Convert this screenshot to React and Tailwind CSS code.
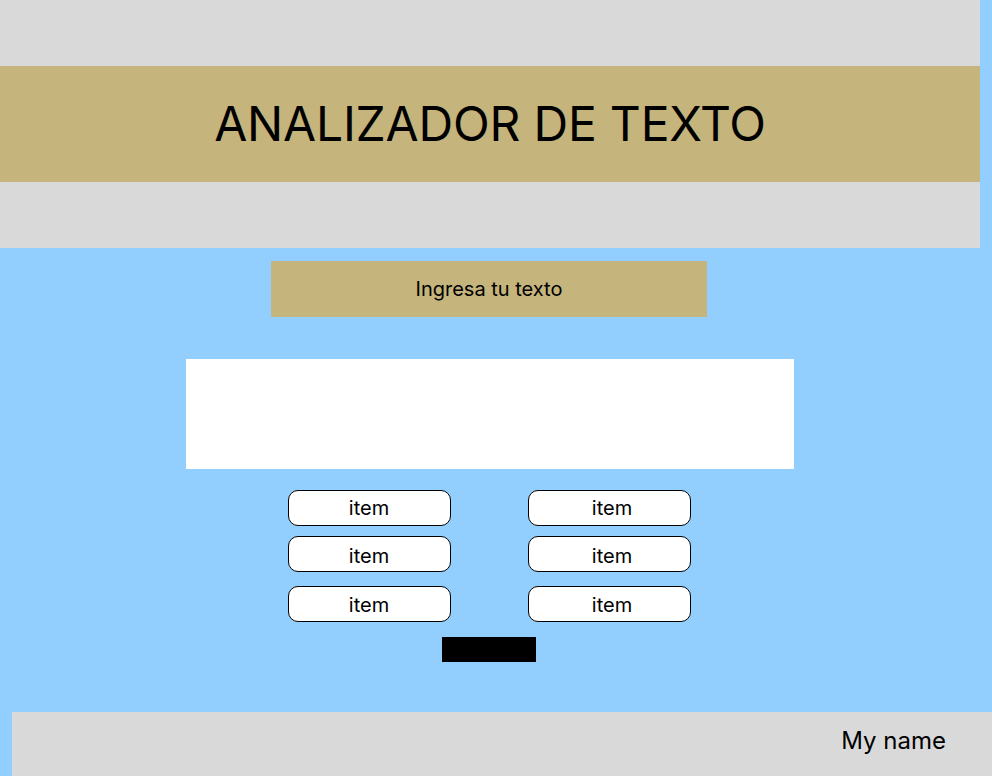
import React from 'react';

const items = ['item', 'item', 'item', 'item', 'item', 'item'];

export default function App() {
  return (
    <div className="min-h-[776px] bg-[#92cfff] font-['Inter',sans-serif] text-black">
      <header className="w-[980px] h-[248px] bg-[#d9d9d9] pt-[66px]">
        <div className="h-[116px] bg-[#c5b47b] flex items-center justify-center">
          <h1 className="text-[48px] leading-none font-normal tracking-[-0.2px]">ANALIZADOR DE TEXTO</h1>
        </div>
      </header>

      <main className="w-[978px] flex flex-col items-center">
        <div className="mt-[13px] w-[436px] h-[56px] bg-[#c5b47b] flex items-center justify-center text-[20px]">
          Ingresa tu texto
        </div>

        <div className="mt-[42px] ml-[2px] w-[608px] h-[110px] bg-white" />

        <div className="mt-[21px] grid grid-cols-[163px_163px] gap-x-[77px]">
          {items.map((label, idx) => (
            <div
              key={idx}
              className={`h-[36px] bg-white border border-black rounded-[10px] flex items-center justify-center text-[20px] ${
                idx % 2 === 1 ? 'pl-[6px]' : ''
              } ${idx >= 4 ? 'mt-[14px] pt-[2px]' : idx >= 2 ? 'mt-[10px] pt-[4px]' : ''}`}
            >
              {label}
            </div>
          ))}
        </div>

        <div className="mt-[15px] w-[94px] h-[25px] bg-black" />
      </main>

      <footer className="mt-[50px] ml-[12px] h-[64px] bg-[#d9d9d9] flex items-center justify-end pr-[46px] pb-[6px]">
        <span className="text-[24px]">My name</span>
      </footer>
    </div>
  );
}
